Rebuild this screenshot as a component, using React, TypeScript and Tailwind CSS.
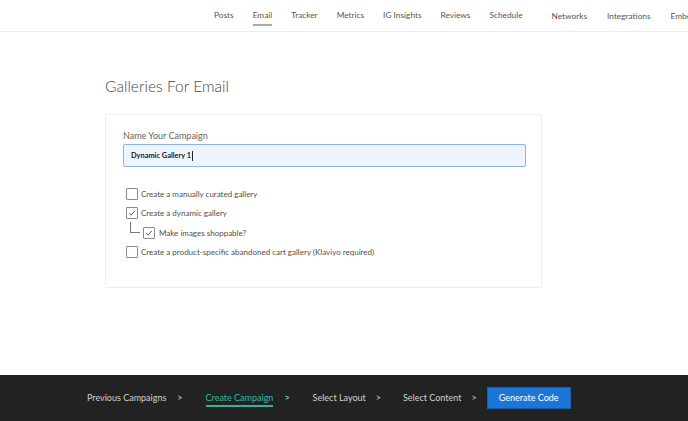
import { useState } from 'react'

const navItems = ['Posts', 'Email', 'Tracker', 'Metrics', 'IG Insights', 'Reviews', 'Schedule']
const navExtra = ['Networks', 'Integrations', 'Embed']

function Box({ checked }: { checked?: boolean }) {
  return (
    <span className="flex h-[12px] w-[12px] shrink-0 items-center justify-center rounded-[1px] border border-[#8a8a8a] bg-white">
      {checked && (
        <svg width="8" height="8" viewBox="0 0 8 8" fill="none">
          <path d="M1.3 4.2 L3.2 6 L6.8 1.8" stroke="#555" strokeWidth="1" />
        </svg>
      )}
    </span>
  )
}

function Arrow() {
  return <span className="ml-[11px] mr-[23px]">&gt;</span>
}

export default function App() {
  const [name] = useState('Dynamic Gallery 1')

  return (
    <div className="flex h-screen flex-col overflow-hidden bg-white text-[#555]" style={{ fontFamily: 'Lato, "Open Sans", sans-serif' }}>
      {/* Top nav */}
      <header className="flex h-[32px] shrink-0 items-center overflow-hidden whitespace-nowrap border-b border-[#ececec] pl-[214px] text-[8.3px]">
        <nav className="flex items-center gap-[19px]">
          {navItems.map((item) => (
            <span key={item} className="relative">
              {item}
              {item === 'Email' && <span className="absolute left-0 right-0 top-[15px] h-[2px] bg-[#a8a8a8]" />}
            </span>
          ))}
        </nav>
        <span className="ml-[15px] mr-[14px] h-[16px] w-px bg-[#dcdcdc]" />
        <nav className="flex items-center gap-[20px] pt-[2px]">
          {navExtra.map((item) => (
            <span key={item}>{item}</span>
          ))}
        </nav>
      </header>

      {/* Content */}
      <main className="flex-1 pl-[105px] pt-[44px]">
        <h1 className="text-[15.6px] font-light leading-[20px] text-[#474747]">Galleries For Email</h1>
        <div className="mt-[18px] h-[174px] w-[437px] rounded-[2px] border border-[#ededed] px-[17px] pt-[15px]">
          <label className="block text-[9px] leading-[12px] text-[#666]">Name Your Campaign</label>
          <div className="mt-[2px] flex h-[23px] w-[403px] items-center rounded-[2px] border border-[#8fb3f0] bg-[#eef4fd] px-[7px] text-[7.4px] font-bold text-[#222]">
            {name}
            <span className="ml-px h-[10px] w-px bg-[#222]" />
          </div>

          <div className="mt-[21px] flex flex-col gap-[7.3px] text-[8px] leading-[12px] text-[#4f4f4f]">
            <div className="flex items-center gap-[3px] pl-[3px]">
              <Box />
              <span>Create a manually curated gallery</span>
            </div>
            <div className="flex items-center gap-[3px] pl-[3px]">
              <Box checked />
              <span>Create a dynamic gallery</span>
            </div>
            <div className="relative flex items-center gap-[4px] pl-[20px]">
              <span className="absolute left-[7px] top-[-5px] h-[11px] w-[10px] border-b border-l border-[#777]" />
              <Box checked />
              <span>Make images shoppable?</span>
            </div>
            <div className="flex items-center gap-[3px] pl-[3px]">
              <Box />
              <span>Create a product-specific abandoned cart gallery (Klaviyo required)</span>
            </div>
          </div>
        </div>
      </main>

      {/* Footer steps */}
      <footer className="flex h-[46px] shrink-0 items-center whitespace-nowrap bg-[#222] pl-[87px] text-[9px] text-[#d0d0d0]">
        <span>Previous Campaigns</span>
        <Arrow />
        <span className="border-b-2 border-[#2fb59a] pt-[2px] text-[#34b99d]">Create Campaign</span>
        <Arrow />
        <span>Select Layout</span>
        <span className="ml-[10px] mr-[22px]">&gt;</span>
        <span>Select Content</span>
        <span className="ml-[10px] mr-[10px]">&gt;</span>
        <button className="flex h-[22px] w-[84px] items-center justify-center border border-[#0f5fb8] bg-[#1b76d8] text-[9px] text-white">
          Generate Code
        </button>
      </footer>
    </div>
  )
}
